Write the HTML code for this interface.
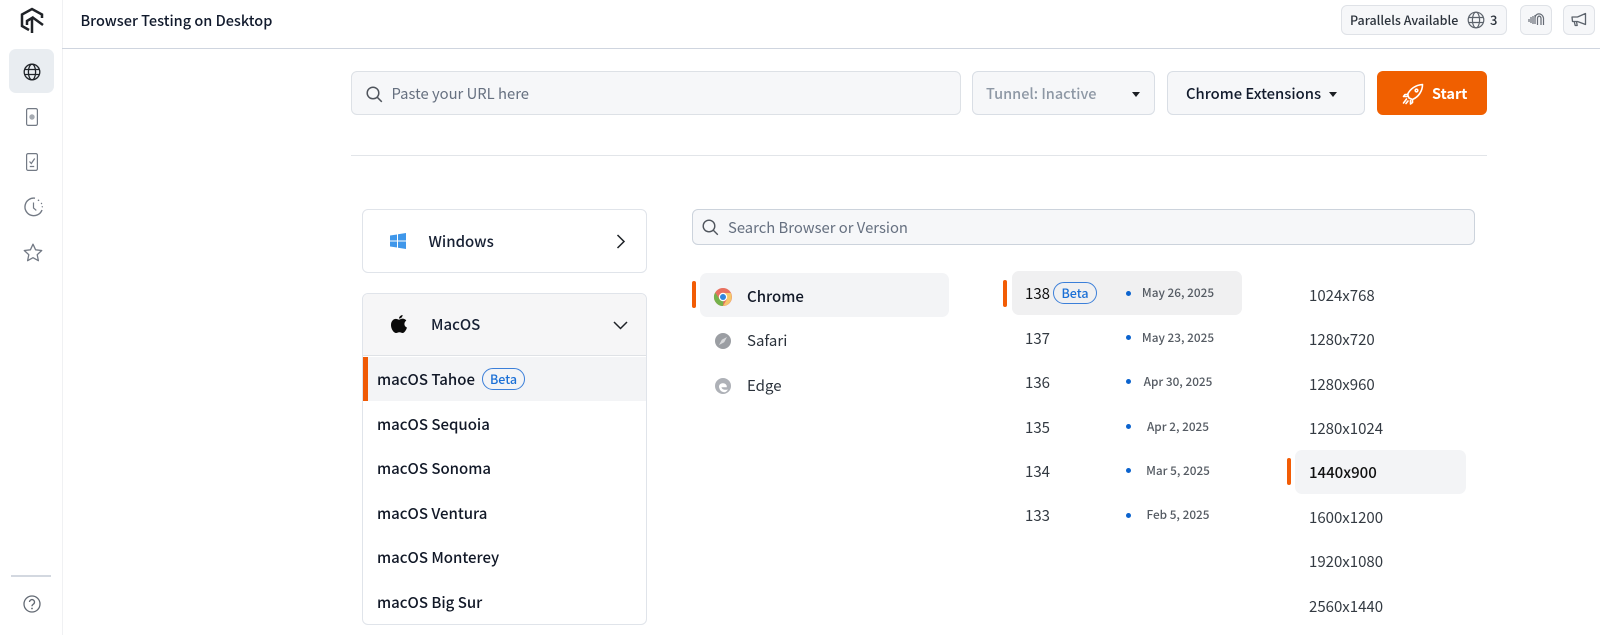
<!DOCTYPE html>
<html><head><meta charset="utf-8"><title>Browser Testing on Desktop</title>
<style>
*{box-sizing:border-box}
html,body{margin:0;padding:0;width:1600px;height:635px;overflow:hidden;background:#fff}
body{position:relative;font-family:"Noto Sans CJK JP","Liberation Sans",sans-serif;color:#111827}
.a{position:absolute}
.t{position:absolute;white-space:nowrap;line-height:20px;height:20px;font-size:15px;margin-top:-10px}
.box{position:absolute;border:1px solid #e0e4ea;border-radius:6px}
.fill{background:#f6f7f9}
.bar{position:absolute;background:#f25c05;border-radius:2px;width:4px;height:27px}
.pill{position:absolute;border:1px solid #3b7fd9;border-radius:11px;color:#1a6fd6;font-size:12.5px;font-weight:500;height:22px;line-height:20px;text-align:center}
.dot{position:absolute;width:5px;height:5px;border-radius:50%;background:#0b63ce}
.date{position:absolute;left:1118px;width:120px;text-align:center;font-size:11.8px;font-weight:500;color:#555b63;line-height:16px;margin-top:-8px;white-space:nowrap}
svg{position:absolute;overflow:visible}
.g{color:#333a42}
</style></head><body>

<!-- sidebar -->
<div class="a" style="left:0;top:0;width:63px;height:635px;background:#fff;border-right:1px solid #f0f1f3"></div>
<div class="a" style="left:62px;top:48px;width:1538px;height:1px;background:#cfd5df"></div>

<svg style="left:20px;top:8px" width="24" height="25" viewBox="0 0 24 25" fill="none" stroke="#202328" stroke-width="2.500">
<path d="M9 22 2 18V6.500L12 1l10 5.500V10"/>
<path d="M12 25V10L7 13v4M12 9l11 8"/>
</svg>

<div class="a" style="left:9px;top:49px;width:45px;height:44px;background:#e9edf1;border-radius:7px"></div>
<svg style="left:23px;top:63px" width="18" height="18" viewBox="0 0 18 18" fill="none" stroke="#1f2328" stroke-width="1.300">
<circle cx="9" cy="9" r="7.800"/><ellipse cx="9" cy="9" rx="3.600" ry="7.800"/><path d="M1.500 6.500h15M1.500 11.500h15"/>
</svg>
<svg style="left:26px;top:108px" width="12" height="18" viewBox="0 0 12 18" fill="none" stroke="#737a85" stroke-width="1.200">
<rect x=".6" y=".6" width="10.800" height="16.800" rx="1.500"/><circle cx="6" cy="9" r="2.700" fill="#a6abb2" stroke="none"/>
</svg>
<svg style="left:26px;top:153px" width="12" height="18" viewBox="0 0 12 18" fill="none" stroke="#737a85" stroke-width="1.200">
<rect x=".6" y=".6" width="10.800" height="16.800" rx="1.500"/><path d="M3.500 8.500 5.300 10.500 8.700 5.500M3.800 13.500h4.400"/>
</svg>
<svg style="left:23px;top:197px" width="21" height="20" viewBox="0 0 21 20" fill="none" stroke="#737a85" stroke-width="1.400">
<path d="M12 1.200A8.800 8.800 0 1 0 19 13"/><path d="M10.500 5.500v5.500l2.800 2.400" stroke-width="1.200"/>
<circle cx="15.500" cy="3.300" r=".8" fill="#737a85" stroke="none"/><circle cx="18.500" cy="6.500" r=".7" fill="#737a85" stroke="none"/><circle cx="19.300" cy="9.800" r=".7" fill="#737a85" stroke="none"/>
</svg>
<svg style="left:23px;top:243px" width="20" height="19" viewBox="0 0 20 19" fill="none" stroke="#737a85" stroke-width="1.300" stroke-linejoin="round">
<path d="M10 1.200 12.600 6.800 18.700 7.500 14.200 11.700 15.400 17.700 10 14.700 4.600 17.700 5.800 11.700 1.300 7.500 7.400 6.800Z"/>
</svg>
<div class="a" style="left:11px;top:575px;width:40px;height:2px;background:#d3d8e0"></div>
<svg style="left:23px;top:595px" width="18" height="18" viewBox="0 0 18 18" fill="none" stroke="#626973" stroke-width="1.300">
<circle cx="9" cy="9" r="8"/><path d="M6.500 7a2.500 2.500 0 1 1 3.800 2.200C9.400 9.800 9 10.300 9 11.200"/><circle cx="9" cy="13.500" r=".9" fill="#626973" stroke="none"/>
</svg>

<!-- header -->
<div class="t" style="left:80.500px;top:21px;font-weight:500;font-size:14.500px;color:#111a2c">Browser Testing on Desktop</div>
<div class="box fill" style="left:1341px;top:5px;width:166px;height:30px;border-color:#dfe2e7;border-width:1.500px"></div>
<div class="t" style="left:1350px;top:20px;font-size:12.500px;font-weight:500;color:#2b323b">Parallels Available</div>
<svg style="left:1467px;top:11px" width="18" height="18" viewBox="0 0 18 18" fill="none" stroke="#5c636c" stroke-width="1.200">
<circle cx="9" cy="9" r="7.800"/><ellipse cx="9" cy="9" rx="3.600" ry="7.800"/><path d="M1.500 6.500h15M1.500 11.500h15"/>
</svg>
<div class="t" style="left:1490px;top:20px;font-size:13px;font-weight:500;color:#2b323b">3</div>
<div class="box fill" style="left:1520px;top:5px;width:32px;height:30px;border-color:#dfe2e7;border-width:1.500px"></div>
<svg style="left:1528px;top:12px" width="17" height="14" viewBox="0 0 17 14" fill="none" stroke="#666c75" stroke-width="1.200">
<path d="M1 7v3M3 5v6M5 4v8M7 3v9M7 6c0-5 7-6 8.500 0v7M9.500 13V6c.5-2.500 3-2.500 3.500 0v7"/>
</svg>
<div class="box fill" style="left:1563px;top:5px;width:32px;height:30px;border-color:#dfe2e7;border-width:1.500px"></div>
<svg style="left:1571px;top:12px" width="16" height="15" viewBox="0 0 16 15" fill="none" stroke="#5c636c" stroke-width="1.300" stroke-linejoin="round">
<path d="M1 5h5.500L14.500 1.500v11L6.500 9.500H1.500ZM3.200 9.500l1 4h2l-.7-4"/>
</svg>

<!-- top bar -->
<div class="box fill" style="left:351px;top:71px;width:610px;height:44px;border-color:#dde1e6;border-width:1.500px"></div>
<svg style="left:366px;top:86px" width="17" height="17" viewBox="0 0 17 17" fill="none" stroke="#4f545c" stroke-width="1.500">
<circle cx="7" cy="7" r="5.800"/><path d="m11.300 11.300 4.500 4.500"/>
</svg>
<div class="t" style="left:391.500px;top:94px;font-size:14.800px;color:#667080">Paste your URL here</div>
<div class="a" style="left:351px;top:155px;width:1136px;height:1px;background:#e2e5e9"></div>

<div class="box fill" style="left:972px;top:71px;width:183px;height:44px;border-color:#d9dee5;border-width:1.500px"></div>
<div class="t" style="left:986px;top:94px;font-size:14.500px;color:#8e98a5;font-weight:500">Tunnel: Inactive</div>
<div class="a" style="left:1132px;top:92px;width:0;height:0;border:4px solid transparent;border-top:5px solid #1c1f24;border-bottom:0"></div>
<div class="box fill" style="left:1167px;top:71px;width:198px;height:44px;border-color:#d9dee5;border-width:1.500px"></div>
<div class="t" style="left:1186px;top:94px;font-size:14.800px;font-weight:500;color:#111a2c">Chrome Extensions</div>
<div class="a" style="left:1329px;top:92px;width:0;height:0;border:4px solid transparent;border-top:5px solid #1c1f24;border-bottom:0"></div>

<div class="a" style="left:1377px;top:71px;width:110px;height:44px;background:#f05f00;border-radius:6px"></div>
<svg style="left:1402px;top:83px" width="22" height="22" viewBox="0 0 22 22" fill="none" stroke="#fff" stroke-width="1.600" stroke-linejoin="round" stroke-linecap="round">
<path d="M7 15 5.500 11.500C8 6 13.500 2 20.500 1.500 20.500 8 16.500 14 10.500 16.500Z"/><path d="M6 11.500H3L1.500 13.500 5 13.500M10.500 16.500V19.500L8.500 21 8.500 17.500M4.500 16 1.500 20M6 18 4 20.500"/><circle cx="14.500" cy="7.500" r="1.300"/>
</svg>
<div class="t" style="left:1432px;top:94px;color:#fff;font-weight:700;font-size:14.500px">Start</div>

<!-- OS panel -->
<div class="box" style="left:362px;top:209px;width:285px;height:64px;background:#fff"></div>
<svg style="left:390px;top:233px" width="16" height="16" viewBox="0 0 16 16" fill="#3f97ea">
<path d="M0 2.500 7 1.500V7.500H0ZM8 1.300 16 0V7.500H8ZM0 8.500H7V14.500L0 13.500ZM8 8.500H16V16L8 14.700Z"/>
</svg>
<div class="t" style="left:428.500px;top:242px;font-weight:500;color:#172033">Windows</div>
<svg style="left:616px;top:234px" width="10" height="15" viewBox="0 0 10 15" fill="none" stroke="#1e2227" stroke-width="1.500"><path d="m1.500 1 6.500 6.500-6.500 6.500"/></svg>

<div class="box" style="left:362px;top:293px;width:285px;height:332px;background:#fff;overflow:hidden">
<div class="a" style="left:0;top:0;width:283px;height:62px;background:#f6f6f7;border-bottom:1px solid #dfe2e6"></div>
<div class="a" style="left:0;top:63px;width:283px;height:44px;background:#f3f4f6"></div>
<div class="a" style="left:0;top:63px;width:5px;height:44px;background:#f05a05"></div>
</div>
<svg style="left:391px;top:315px" width="16" height="19" viewBox="0 0 16 19" fill="#0b0b0b">
<path d="M11.600 0c.1 1.800-1.600 3.700-3.500 3.600C7.900 1.800 9.800.1 11.600 0ZM8 4.700c.9 0 2-1.100 3.700-1.100 1.100 0 2.700.5 3.600 2-2.800 1.800-2.400 5.800.7 7-.7 2-2.600 5.400-4.400 5.400-1.100 0-1.700-.8-3.200-.8s-2.100.8-3.200.8C2.500 18 0 13.700 0 10.100 0 6.100 2.500 3.900 4.800 3.900c1.300 0 2.400.8 3.200.8Z"/>
</svg>
<div class="t" style="left:431px;top:325px;font-weight:500;color:#172033">MacOS</div>
<svg style="left:613px;top:321px" width="15" height="9" viewBox="0 0 15 9" fill="none" stroke="#1e2227" stroke-width="1.500"><path d="m1 1 6.500 6.500L14 1"/></svg>

<div class="t" style="left:377px;top:380px;font-weight:500">macOS Tahoe</div>
<div class="pill" style="left:482px;top:368px;width:43px">Beta</div>
<div class="t" style="left:377px;top:424.500px;font-weight:500">macOS Sequoia</div>
<div class="t" style="left:377px;top:469px;font-weight:500">macOS Sonoma</div>
<div class="t" style="left:377px;top:514px;font-weight:500">macOS Ventura</div>
<div class="t" style="left:377px;top:558px;font-weight:500">macOS Monterey</div>
<div class="t" style="left:377px;top:603px;font-weight:500">macOS Big Sur</div>

<!-- Browser search -->
<div class="box fill" style="left:692px;top:209px;width:783px;height:36px;border-color:#ccd3dc"></div>
<svg style="left:702px;top:219px" width="17" height="17" viewBox="0 0 17 17" fill="none" stroke="#4f545c" stroke-width="1.400">
<circle cx="7" cy="7" r="5.800"/><path d="m11.300 11.300 4.500 4.500"/>
</svg>
<div class="t" style="left:728px;top:228px;font-size:14.800px;color:#667080">Search Browser or Version</div>

<!-- browsers -->
<div class="a" style="left:700px;top:273px;width:249px;height:44px;background:#f3f4f6;border-radius:7px"></div>
<div class="bar" style="left:692px;top:281px"></div>
<svg style="left:714px;top:288px" width="18" height="18" viewBox="0 0 18 18">
<circle cx="9" cy="9" r="9" fill="#e8705f"/>
<path d="M9 18A9 9 0 0 1 1.200 4.500L5.500 11 9.500 13Z" fill="#75b24c"/>
<path d="M9 5h7.800A9 9 0 0 1 9 18l3.800-6.500Z" fill="#f5c76b"/>
<circle cx="9" cy="9" r="4.200" fill="#fff"/><circle cx="9" cy="9" r="3" fill="#2f86df"/>
</svg>
<div class="t" style="left:747px;top:297px;font-weight:500">Chrome</div>
<svg style="left:715px;top:333px" width="16" height="16" viewBox="0 0 16 16">
<circle cx="8" cy="8" r="8" fill="#9b9ea3"/><path d="M12 4 9.200 9.200 4 12 6.800 6.800Z" fill="#d9dadc"/>
</svg>
<div class="t" style="left:747px;top:341px;color:#2b323b">Safari</div>
<svg style="left:715px;top:378px" width="16" height="16" viewBox="0 0 16 16">
<circle cx="8" cy="8" r="8" fill="#aeb1b7"/><path d="M4 9C4 6 6.500 5 8.500 5.300 11 5.700 12 7.500 11.800 9.300H6.500C6.800 11.500 9.500 12.300 13 11.500 11 15 8.500 14.500 6.800 13.500 5 12.500 4.500 11 4 9Z" fill="#fff"/>
</svg>
<div class="t" style="left:747px;top:386px;color:#2b323b">Edge</div>

<!-- versions -->
<div class="a" style="left:1012px;top:271px;width:230px;height:44px;background:#f0f0f1;border-radius:7px"></div>
<div class="bar" style="left:1003px;top:280px"></div>
<div class="t" style="left:1025px;top:294px;color:#111">138</div>
<div class="pill" style="left:1053px;top:282px;width:44px">Beta</div>
<div class="t g" style="left:1025px;top:339px">137</div>
<div class="t g" style="left:1025px;top:382.500px">136</div>
<div class="t g" style="left:1025px;top:428px">135</div>
<div class="t g" style="left:1025px;top:472px">134</div>
<div class="t g" style="left:1025px;top:516px">133</div>
<div class="dot" style="left:1126px;top:291px"></div><div class="date" style="top:293px">May 26, 2025</div>
<div class="dot" style="left:1126px;top:335px"></div><div class="date" style="top:338px">May 23, 2025</div>
<div class="dot" style="left:1126px;top:379px"></div><div class="date" style="top:381.500px">Apr 30, 2025</div>
<div class="dot" style="left:1126px;top:424px"></div><div class="date" style="top:427px">Apr 2, 2025</div>
<div class="dot" style="left:1126px;top:468px"></div><div class="date" style="top:471px">Mar 5, 2025</div>
<div class="dot" style="left:1126px;top:513px"></div><div class="date" style="top:515px">Feb 5, 2025</div>

<!-- resolutions -->
<div class="a" style="left:1295px;top:450px;width:171px;height:44px;background:#f3f4f6;border-radius:7px"></div>
<div class="bar" style="left:1287px;top:458px"></div>
<div class="t g" style="left:1309px;top:295.500px">1024x768</div>
<div class="t g" style="left:1309px;top:340px">1280x720</div>
<div class="t g" style="left:1309px;top:385px">1280x960</div>
<div class="t g" style="left:1309px;top:428.500px">1280x1024</div>
<div class="t" style="left:1309px;top:473px;font-weight:500;color:#111">1440x900</div>
<div class="t g" style="left:1309px;top:518px">1600x1200</div>
<div class="t g" style="left:1309px;top:562px">1920x1080</div>
<div class="t g" style="left:1309px;top:607px">2560x1440</div>
</body></html>
